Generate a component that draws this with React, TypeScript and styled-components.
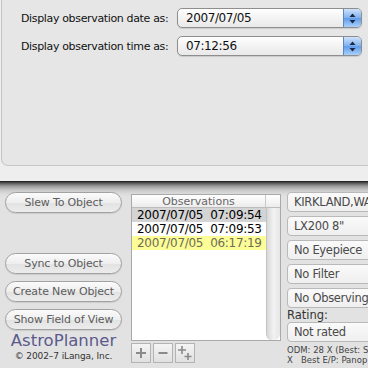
import styled, { createGlobalStyle } from 'styled-components';

const GlobalStyle = createGlobalStyle`
  html, body {
    margin: 0;
    padding: 0;
    background: #e2e2e2;
  }
  body {
    font-family: "DejaVu Sans", "Liberation Sans", sans-serif;
  }
`;

const Page = styled.div`
  width: 368px;
  height: 368px;
  overflow: hidden;
  display: flex;
  flex-direction: column;
`;

/* ---------- preferences sheet ---------- */

const Sheet = styled.section`
  height: 181px;
  flex: none;
  background: #eeeeee;
  padding-left: 1px;
  box-sizing: border-box;
`;

const GroupBox = styled.div`
  height: 166px;
  box-sizing: border-box;
  margin-right: -10px;
  background: #e6e6e6;
  border: 1px solid #c6c6c6;
  border-top: none;
  border-radius: 0 0 0 7px;
  padding: 8px 0 0 19px;
  display: flex;
  flex-direction: column;
  gap: 8px;
`;

const PrefRow = styled.div`
  display: flex;
  align-items: center;
  gap: 8px;
`;

const PrefLabel = styled.span`
  width: 148px;
  font-size: 11px;
  letter-spacing: -0.35px;
  color: #111;
  white-space: nowrap;
`;

const PopUp = styled.div`
  width: 185px;
  height: 20px;
  box-sizing: border-box;
  border: 1px solid #8e8e8e;
  border-radius: 5px;
  background: linear-gradient(#ffffff, #f3f3f3 50%, #e9e9e9);
  box-shadow: 0 1px 1px rgba(0, 0, 0, 0.12);
  display: flex;
  align-items: center;
  overflow: hidden;
`;

const PopUpText = styled.span`
  flex: 1;
  padding-left: 8px;
  font-size: 12px;
  letter-spacing: -0.4px;
  color: #111;
`;

const ArrowCap = styled.span`
  width: 17px;
  height: 100%;
  border-left: 1px solid #5b86c4;
  background: linear-gradient(#cfe2fb, #7fb1f0 50%, #5f9be9 51%, #a9d0fb);
  display: flex;
  align-items: center;
  justify-content: center;
`;

function Arrows() {
  return (
    <svg width="7" height="11" viewBox="0 0 7 11">
      <path d="M3.5 0.5 L6.5 4 H0.5 Z" fill="#1b2a44" />
      <path d="M3.5 10.5 L6.5 7 H0.5 Z" fill="#1b2a44" />
    </svg>
  );
}

/* ---------- main window ---------- */

const Window = styled.main`
  flex: 1;
  display: flex;
  background: linear-gradient(
    #151515 0,
    #555555 2px,
    #9a9a9a 5px,
    #c8c8c8 9px,
    #dcdcdc 13px,
    #e2e2e2 16px
  );
  padding: 10px 0 0 5px;
  gap: 9px;
`;

const LeftColumn = styled.div`
  width: 117px;
  display: flex;
  flex-direction: column;
  align-items: center;
`;

const PushButton = styled.button<{ $gapTop?: number }>`
  width: 117px;
  height: 21px;
  margin-top: ${(p) => p.$gapTop ?? 7}px;
  border: 1px solid #a2a2a2;
  border-radius: 11px;
  background: linear-gradient(#fbfbfb, #eeeeee 50%, #e2e2e2 51%, #ececec);
  box-shadow: 0 1px 1px rgba(0, 0, 0, 0.1);
  font-family: "DejaVu Sans", sans-serif;
  font-size: 11px;
  letter-spacing: -0.15px;
  color: #5c5c5c;
  padding: 0;
  white-space: nowrap;
`;

const Brand = styled.div`
  margin-top: 2px;
  font-family: "DejaVu Sans", sans-serif;
  font-size: 16.5px;
  color: #5b5a8c;
  line-height: 18px;
`;

const Copyright = styled.div`
  font-size: 9px;
  letter-spacing: -0.1px;
  color: #333;
  line-height: 12px;
`;

const MiddleColumn = styled.div`
  width: 150px;
  display: flex;
  flex-direction: column;
  padding-top: 3px;
`;

const Table = styled.div`
  height: 145px;
  border: 1px solid #a9a9a9;
  background: #fff;
  display: grid;
  grid-template-columns: 1fr 14px;
  grid-template-rows: 13px 1fr;
`;

const HeaderCell = styled.div`
  font-size: 11px;
  line-height: 13px;
  color: #666;
  text-align: center;
  background: linear-gradient(#ffffff, #ececec);
  border-bottom: 1px solid #bdbdbd;
  border-right: 1px solid #c8c8c8;
`;

const Corner = styled.div`
  background: linear-gradient(#ffffff, #ececec);
  border-bottom: 1px solid #bdbdbd;
`;

const Rows = styled.div`
  display: flex;
  flex-direction: column;
`;

const Row = styled.div<{ $tone: 'selected' | 'plain' | 'flagged' }>`
  height: 14px;
  line-height: 14px;
  padding-left: 5px;
  font-size: 12px;
  letter-spacing: -0.3px;
  white-space: pre;
  color: ${(p) => (p.$tone === 'flagged' ? '#6e6e55' : '#000')};
  background: ${(p) =>
    p.$tone === 'selected' ? '#d4d4d4' : p.$tone === 'flagged' ? '#fdfd98' : '#fff'};
`;

const ScrollTrack = styled.div`
  background: linear-gradient(90deg, #d8d8d8, #f2f2f2 50%, #e6e6e6);
  border-left: 1px solid #c4c4c4;
  border-radius: 0 0 6px 6px;
`;

const ListButtons = styled.div`
  display: flex;
  gap: 2px;
  margin-top: 2px;
`;

const SquareButton = styled.div`
  width: 18px;
  height: 18px;
  border: 1px solid #b3b3b3;
  background: linear-gradient(#f4f4f4, #e0e0e0);
  display: flex;
  align-items: center;
  justify-content: center;
`;

const RightColumn = styled.div`
  flex: 1;
  display: flex;
  flex-direction: column;
  gap: 4px;
  padding-top: 1px;
  margin-left: -3px;
  overflow: hidden;
`;

const Choice = styled.div`
  width: 120px;
  height: 20px;
  box-sizing: border-box;
  border: 1px solid #b9b9b9;
  border-radius: 4px;
  background: linear-gradient(#fafafa, #efefef);
  font-size: 11.5px;
  letter-spacing: -0.3px;
  line-height: 18px;
  padding-left: 6px;
  color: #4a4a4a;
  white-space: nowrap;
  overflow: hidden;
`;

const RatingLabel = styled.div`
  font-size: 11.5px;
  color: #333;
  margin: -4px 0 -4px;
  line-height: 14px;
`;

const Fine = styled.div`
  font-size: 8.5px;
  line-height: 10px;
  color: #444;
  white-space: pre;
  margin-top: -1px;
`;

function PlusIcon() {
  return (
    <svg width="12" height="12" viewBox="0 0 12 12">
      <path d="M6 1 V11 M1 6 H11" stroke="#8a8a8a" strokeWidth="2" />
    </svg>
  );
}

function MinusIcon() {
  return (
    <svg width="12" height="12" viewBox="0 0 12 12">
      <path d="M1.5 6 H10.5" stroke="#8a8a8a" strokeWidth="2" />
    </svg>
  );
}

function PlusPlusIcon() {
  return (
    <svg width="16" height="16" viewBox="0 0 16 16">
      <path d="M5 1 V9 M1 5 H9" stroke="#8a8a8a" strokeWidth="1.6" />
      <path d="M11 8 V15 M7.5 11.5 H14.5" stroke="#8a8a8a" strokeWidth="1.6" />
    </svg>
  );
}

const observations: { text: string; tone: 'selected' | 'plain' | 'flagged' }[] = [
  { text: '2007/07/05  07:09:54', tone: 'selected' },
  { text: '2007/07/05  07:09:53', tone: 'plain' },
  { text: '2007/07/05  06:17:19', tone: 'flagged' },
];

export default function App() {
  return (
    <Page>
      <GlobalStyle />
      <Sheet>
        <GroupBox>
          <PrefRow>
            <PrefLabel>Display observation date as:</PrefLabel>
            <PopUp>
              <PopUpText>2007/07/05</PopUpText>
              <ArrowCap>
                <Arrows />
              </ArrowCap>
            </PopUp>
          </PrefRow>
          <PrefRow>
            <PrefLabel>Display observation time as:</PrefLabel>
            <PopUp>
              <PopUpText>07:12:56</PopUpText>
              <ArrowCap>
                <Arrows />
              </ArrowCap>
            </PopUp>
          </PrefRow>
        </GroupBox>
      </Sheet>

      <Window>
        <LeftColumn>
          <PushButton $gapTop={1}>Slew To Object</PushButton>
          <PushButton $gapTop={40}>Sync to Object</PushButton>
          <PushButton>Create New Object</PushButton>
          <PushButton>Show Field of View</PushButton>
          <Brand>AstroPlanner</Brand>
          <Copyright>© 2002–7 iLanga, Inc.</Copyright>
        </LeftColumn>

        <MiddleColumn>
          <Table>
            <HeaderCell>Observations</HeaderCell>
            <Corner />
            <Rows>
              {observations.map((o) => (
                <Row key={o.text} $tone={o.tone}>
                  {o.text}
                </Row>
              ))}
            </Rows>
            <ScrollTrack />
          </Table>
          <ListButtons>
            <SquareButton>
              <PlusIcon />
            </SquareButton>
            <SquareButton>
              <MinusIcon />
            </SquareButton>
            <SquareButton>
              <PlusPlusIcon />
            </SquareButton>
          </ListButtons>
        </MiddleColumn>

        <RightColumn>
          <Choice>KIRKLAND,WA</Choice>
          <Choice>LX200 8"</Choice>
          <Choice>No Eyepiece</Choice>
          <Choice>No Filter</Choice>
          <Choice>No Observing</Choice>
          <RatingLabel>Rating:</RatingLabel>
          <Choice>Not rated</Choice>
          <Fine>{'ODM: 28 X (Best: S\nX   Best E/P: Panop'}</Fine>
        </RightColumn>
      </Window>
    </Page>
  );
}
